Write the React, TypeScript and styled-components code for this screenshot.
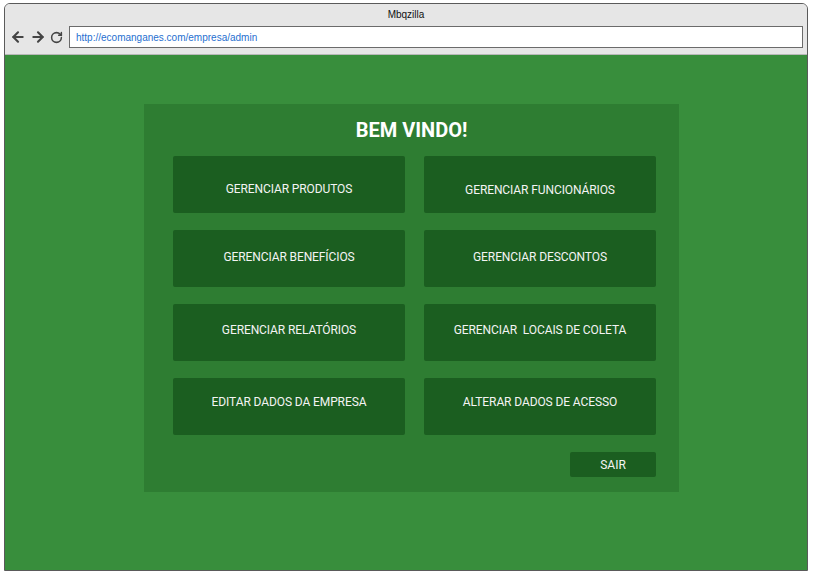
import React from 'react';
import styled, { createGlobalStyle } from 'styled-components';
import { ArrowLeft, ArrowRight, RotateCw } from 'lucide-react';

const GlobalStyle = createGlobalStyle`
  html, body {
    margin: 0;
    padding: 0;
    background: #ffffff;
  }
`;

// ======= Browser frame =======
const Frame = styled.div`
  box-sizing: border-box;
  width: 804px;
  height: 568px;
  margin: 3px 0 0 4px;
  border: 1px solid #5a5a5a;
  border-radius: 6px 6px 0 0;
  display: flex;
  flex-direction: column;
  overflow: hidden;
  background: #e6e6e6;
`;

const TitleBar = styled.div`
  height: 50px;
  display: flex;
  flex-direction: column;
  background: #e6e6e6;
  border-bottom: 1px solid #b8b8b8;
`;

const WindowTitle = styled.div`
  height: 22px;
  line-height: 22px;
  text-align: center;
  font-family: "Liberation Sans", Arial, sans-serif;
  font-size: 10px;
  color: #111;
`;

const NavRow = styled.div`
  display: flex;
  align-items: center;
  height: 22px;
  padding: 0 4px 0 5px;
`;

const NavIcons = styled.div`
  display: flex;
  align-items: center;
  gap: 4px;
  width: 59px;
  color: #454545;
`;

const AddressBar = styled.div`
  flex: 1;
  box-sizing: border-box;
  height: 22px;
  border: 1px solid #6b6b6b;
  background: #fff;
  padding-left: 6px;
  display: flex;
  align-items: center;
  font-family: "Liberation Sans", Arial, sans-serif;
  font-size: 10px;
  color: #1f6fd0;
`;

const Content = styled.div`
  flex: 1;
  background: #388e3c;
  padding: 49px 0 0 139px;
`;

// ======= Admin panel =======
const Panel = styled.div`
  box-sizing: border-box;
  width: 535px;
  padding: 15px 23px 15px 29px;
  background: #2e7d32;
  display: flex;
  flex-direction: column;
`;

const Heading = styled.h1`
  margin: 0 0 15px 0;
  height: 22px;
  line-height: 22px;
  text-align: center;
  padding-right: 6px;
  font-family: Roboto, "Noto Sans", sans-serif;
  font-size: 20px;
  font-weight: 700;
  color: #ffffff;
`;

const ButtonGrid = styled.div`
  display: grid;
  grid-template-columns: 232px 232px;
  grid-auto-rows: 57px;
  column-gap: 19px;
  row-gap: 17px;
`;

const MenuButton = styled.button<{ $shift: number }>`
  border: none;
  border-radius: 2px;
  background: #1b5e20;
  color: #f4f4f4;
  font-family: Roboto, "Noto Sans", sans-serif;
  font-size: 12px;
  letter-spacing: -0.1px;
  cursor: pointer;
  padding: ${(p) => (p.$shift > 0 ? `${p.$shift * 2}px 0 0` : `0 0 ${-p.$shift * 2}px`)};
  white-space: pre;
`;

const Footer = styled.div`
  display: flex;
  justify-content: flex-end;
  margin-top: 17px;
`;

const ExitButton = styled.button`
  width: 86px;
  height: 25px;
  border: none;
  border-radius: 2px;
  background: #1b5e20;
  color: #f4f4f4;
  font-family: Roboto, "Noto Sans", sans-serif;
  font-size: 12px;
  cursor: pointer;
`;

const menu = [
  { label: 'GERENCIAR PRODUTOS', shift: 4 },
  { label: 'GERENCIAR FUNCIONÁRIOS', shift: 5 },
  { label: 'GERENCIAR BENEFÍCIOS', shift: -2 },
  { label: 'GERENCIAR DESCONTOS', shift: -2 },
  { label: 'GERENCIAR RELATÓRIOS', shift: -3 },
  { label: 'GERENCIAR  LOCAIS DE COLETA', shift: -3 },
  { label: 'EDITAR DADOS DA EMPRESA', shift: -5 },
  { label: 'ALTERAR DADOS DE ACESSO', shift: -5 },
];

const App: React.FC = () => {
  return (
    <>
      <GlobalStyle />
      <Frame>
        <TitleBar>
          <WindowTitle>Mbqzilla</WindowTitle>
          <NavRow>
            <NavIcons>
              <ArrowLeft size={16} strokeWidth={3.2} />
              <ArrowRight size={16} strokeWidth={3.2} />
              <RotateCw size={13} strokeWidth={2.8} />
            </NavIcons>
            <AddressBar>http://ecomanganes.com/empresa/admin</AddressBar>
          </NavRow>
        </TitleBar>
        <Content>
          <Panel>
            <Heading>BEM VINDO!</Heading>
            <ButtonGrid>
              {menu.map((item) => (
                <MenuButton key={item.label} $shift={item.shift}>
                  {item.label}
                </MenuButton>
              ))}
            </ButtonGrid>
            <Footer>
              <ExitButton>SAIR</ExitButton>
            </Footer>
          </Panel>
        </Content>
      </Frame>
    </>
  );
};

export default App;
